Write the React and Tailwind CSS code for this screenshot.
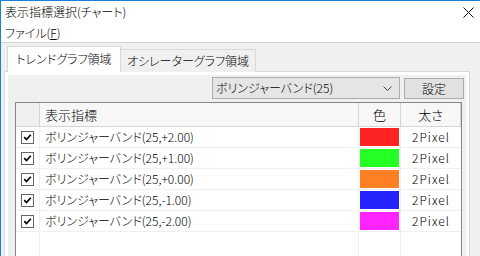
import React from "react";

const rows = [
  { name: "ボリンジャーバンド(25,+2.00)", color: "bg-[#ff2424]" },
  { name: "ボリンジャーバンド(25,+1.00)", color: "bg-[#24ff24]" },
  { name: "ボリンジャーバンド(25,+0.00)", color: "bg-[#ff8024]" },
  { name: "ボリンジャーバンド(25,-1.00)", color: "bg-[#2424ff]" },
  { name: "ボリンジャーバンド(25,-2.00)", color: "bg-[#ff24ff]" },
];

function Check() {
  return (
    <div className="w-[13px] h-[13px] border border-[#666] bg-white flex items-center justify-center">
      <svg width="9" height="9" viewBox="0 0 9 9">
        <path d="M1.2 4.2 L3.5 6.5 L7.8 1.8" stroke="#000" strokeWidth="1.7" fill="none" />
      </svg>
    </div>
  );
}

export default function App() {
  return (
    <div className="w-[480px] h-[256px] overflow-hidden bg-[#f0f0f0] border-t border-l border-[#1a7fd6] text-[12px] text-black font-['Noto_Sans_CJK_JP',sans-serif] font-light [font-feature-settings:'palt'] flex flex-col">
      {/* title bar */}
      <div className="h-[22px] bg-white flex items-center justify-between pl-[4px] pr-[6px] shrink-0">
        <span className="leading-none">表示指標選択(チャート)</span>
        <svg width="11" height="11" viewBox="0 0 11 11">
          <path d="M0.5 0.5 L10.5 10.5 M10.5 0.5 L0.5 10.5" stroke="#111" strokeWidth="1" />
        </svg>
      </div>
      {/* menu bar */}
      <div className="h-[20px] bg-white flex items-center pl-[4px] border-b border-[#d4d4d4] shrink-0">
        <span className="leading-none">ファイル(<span className="underline">F</span>)</span>
      </div>
      {/* body */}
      <div className="flex-1 pl-[3px] pr-[10px] pt-[3px] flex flex-col">
        {/* tabs */}
        <div className="flex items-end pl-[3px] h-[26px] relative z-10">
          <div className="h-[26px] w-[114px] bg-white border border-b-0 border-[#d9d9d9] flex items-center justify-center pb-[2px]">
            トレンドグラフ領域
          </div>
          <div className="h-[23px] w-[135px] bg-[#f0f0f0] border border-l-0 border-b-0 border-[#d9d9d9] flex items-center justify-center">
            オシレーターグラフ領域
          </div>
        </div>
        {/* panel */}
        <div className="flex-1 -mt-px border border-[#d9d9d9] bg-white p-[3px] flex flex-col">
          <div className="flex-1 bg-[#f0f0f0] pl-[7px] pr-[2px] pt-[2px] flex flex-col">
            <div className="flex justify-end gap-[4px] h-[22px]">
              <div className="w-[188px] h-[22px] border border-[#adadad] bg-[#e5e5e5] flex items-center justify-between pl-[3px] pr-[7px]">
                <span>ボリンジャーバンド(25)</span>
                <svg width="9" height="5" viewBox="0 0 9 5">
                  <path d="M0.5 0.5 L4.5 4.5 L8.5 0.5" stroke="#444" strokeWidth="1" fill="none" />
                </svg>
              </div>
              <div className="w-[60px] h-[21px] mt-px border border-[#adadad] bg-[#e1e1e1] flex items-center justify-center">
                設定
              </div>
            </div>
            {/* list view */}
            <div className="mt-[3px] flex-1 border border-[#828790] bg-white w-[447px] relative">
              <div className="grid grid-cols-[24px_319px_42px_60px] h-[24px] text-[13px]">
                <div className="bg-[#f0f0f0] border-r border-b border-[#d5d5d5]"></div>
                <div className="bg-[#f7f7f7] border-r border-b border-[#d5d5d5] flex items-center pl-[5px]">表示指標</div>
                <div className="bg-[#f7f7f7] border-r border-b border-[#d5d5d5] flex items-center justify-center">色</div>
                <div className="bg-[#f7f7f7] border-r border-b border-[#d5d5d5] flex items-center justify-center">太さ</div>
              </div>
              {rows.map((r) => (
                <div key={r.name} className="grid grid-cols-[24px_319px_42px_60px] h-[21px]">
                  <div className="border-r border-b border-[#f0f0f0] flex items-center justify-center">
                    <Check />
                  </div>
                  <div className="border-r border-b border-[#f0f0f0] flex items-center pl-[5px]">{r.name}</div>
                  <div className="border-r border-b border-[#f0f0f0] p-px">
                    <div className={`w-full h-full ${r.color}`}></div>
                  </div>
                  <div className="border-b border-[#f0f0f0] flex items-center justify-center tracking-[1px]">2Pixel</div>
                </div>
              ))}
              <div className="grid grid-cols-[24px_319px_42px_60px] h-[60px]">
                <div className="border-r border-[#f0f0f0]"></div>
                <div></div>
                <div className="border-l border-r border-[#f0f0f0] -ml-px"></div>
                <div></div>
              </div>
            </div>
          </div>
        </div>
      </div>
    </div>
  );
}
